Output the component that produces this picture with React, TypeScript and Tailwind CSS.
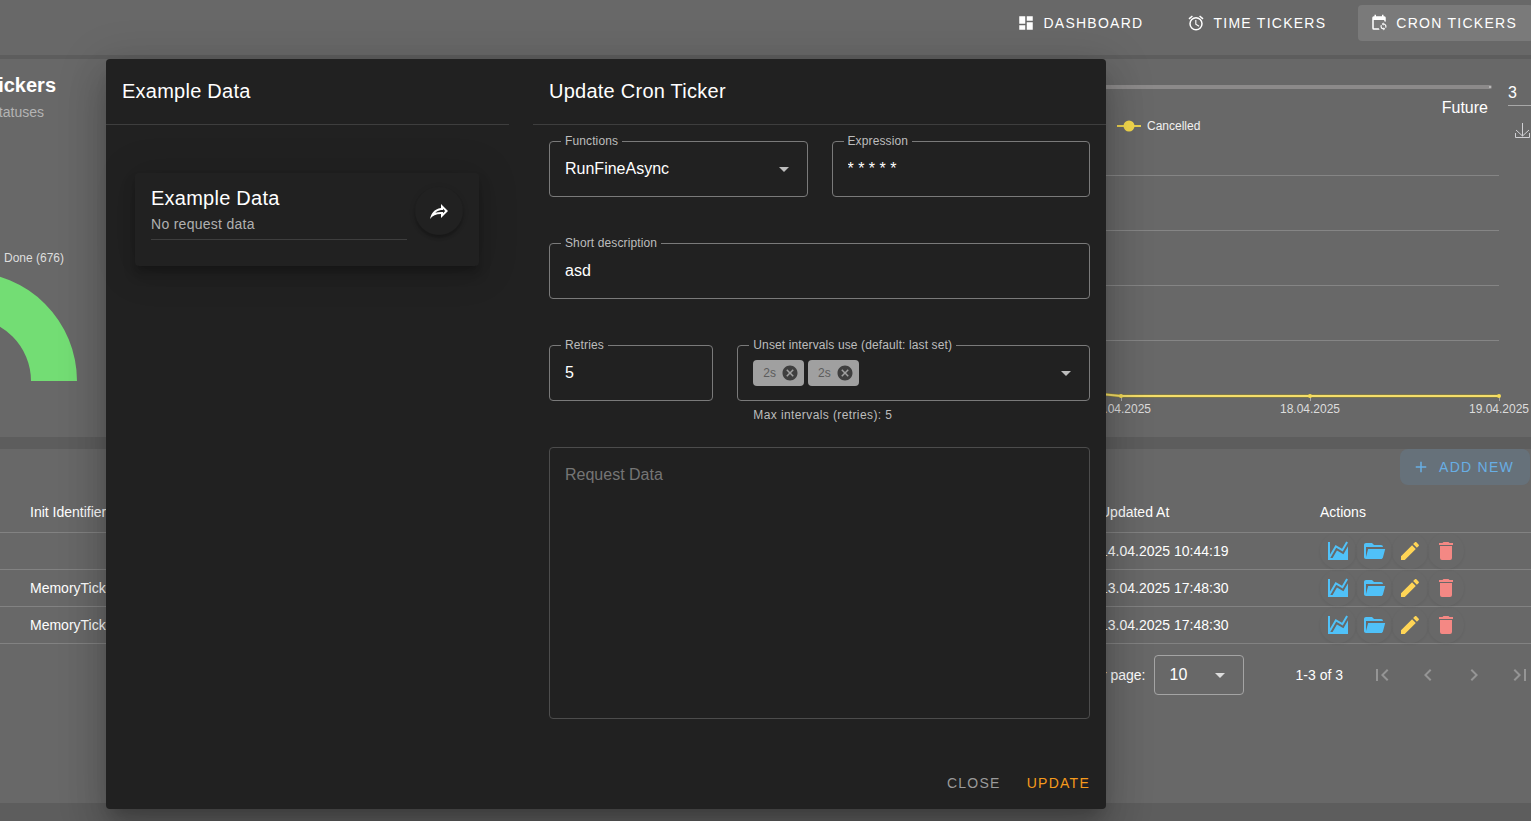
import type { ReactNode } from "react";

const icons = {
  dashboard: "M13,3V9H21V3M13,21H21V11H13M3,21H11V15H3M3,13H11V3H3V13Z",
  alarm:
    "M12,20A7,7 0 0,1 5,13A7,7 0 0,1 12,6A7,7 0 0,1 19,13A7,7 0 0,1 12,20M12,4A9,9 0 0,0 3,13A9,9 0 0,0 12,22A9,9 0 0,0 21,13A9,9 0 0,0 12,4M12.5,8H11V14L15.75,16.85L16.5,15.62L12.5,13.25V8M7.88,3.39L6.6,1.86L2,5.71L3.29,7.24L7.88,3.39M22,5.72L17.4,1.86L16.11,3.39L20.71,7.25L22,5.72Z",
  calendarSync:
    "M18,11V12.5C21.19,12.5 23.09,16.05 21.33,18.71L20.24,17.62C21.06,15.96 19.85,14 18,14V15.5L15.75,13.25L18,11M18,22V20.5C14.81,20.5 12.91,16.95 14.67,14.29L15.76,15.38C14.94,17.04 16.15,19 18,19V17.5L20.25,19.75L18,22M19,3H18V1H16V3H8V1H6V3H5A2,2 0 0,0 3,5V19A2,2 0 0,0 5,21H12.8C12.3,20.4 12,19.7 11.7,19H5V8H19V9.6C19.7,9.7 20.4,9.9 21,10.2V5A2,2 0 0,0 19,3Z",
  chart:
    "M17.45,15.18L22,7.31V21H2V3H4V15.54L9.5,6L16,9.78L20.24,2.45L21.97,3.45L16.74,12.5L10.23,8.75L4.31,19H6.57L10.96,11.44L17.45,15.18Z",
  folder:
    "M19,20H4C2.89,20 2,19.1 2,18V6C2,4.89 2.89,4 4,4H10L12,6H19A2,2 0 0,1 21,8H21L4,8V18L6.14,10H23.21L20.93,18.5C20.7,19.37 19.92,20 19,20Z",
  pencil:
    "M20.71,7.04C21.1,6.65 21.1,6 20.71,5.63L18.37,3.29C18,2.9 17.35,2.9 16.96,3.29L15.12,5.12L18.87,8.87M3,17.25V21H6.75L17.81,9.93L14.06,6.18L3,17.25Z",
  trash:
    "M19,4H15.5L14.5,3H9.5L8.5,4H5V6H19M6,19A2,2 0 0,0 8,21H16A2,2 0 0,0 18,19V7H6V19Z",
  share:
    "M14,5V9C7,10 4,15 3,20C5.5,16.5 9,14.9 14,14.9V19L21,12L14,5M16,9.83L18.17,12L16,14.17V12.9H14C11.93,12.9 10.07,13.28 8.34,13.85C9.74,12.46 11.54,11.37 14,11H16V9.83Z",
  closeCircle:
    "M12,2C17.53,2 22,6.47 22,12C22,17.53 17.53,22 12,22C6.47,22 2,17.53 2,12C2,6.47 6.47,2 12,2M15.59,7L12,10.59L8.41,7L7,8.41L10.59,12L7,15.59L8.41,17L12,13.41L15.59,17L17,15.59L13.41,12L17,8.41L15.59,7Z",
  menuDown: "M7,10L12,15L17,10H7Z",
  plus: "M19,13H13V19H11V13H5V11H11V5H13V11H19V13Z",
  first: "M18.41,16.59L13.82,12L18.41,7.41L17,6L11,12L17,18L18.41,16.59M6,6H8V18H6V6Z",
  prev: "M15.41,16.58L10.83,12L15.41,7.41L14,6L8,12L14,18L15.41,16.58Z",
  next: "M8.59,16.58L13.17,12L8.59,7.41L10,6L16,12L10,18L8.59,16.58Z",
  last: "M5.59,7.41L10.18,12L5.59,16.59L7,18L13,12L7,6L5.59,7.41M16,6H18V18H16V6Z",
};

function Icon({ name, className = "size-6" }: { name: keyof typeof icons; className?: string }) {
  return (
    <svg viewBox="0 0 24 24" fill="currentColor" aria-hidden="true" className={`shrink-0 ${className}`}>
      <path d={icons[name]} />
    </svg>
  );
}

function NavLink({ icon, label, active }: { icon: keyof typeof icons; label: string; active?: boolean }) {
  return (
    <a
      href="#"
      className={`flex h-9 items-center gap-2 rounded pl-3 pr-4 text-sm tracking-[0.09em] text-white ${active ? "bg-[#7a7a7a]" : ""}`}
    >
      <Icon name={icon} className="size-[18px]" />
      {label}
    </a>
  );
}

function StatusCard() {
  return (
    <section className="w-[440px] overflow-hidden bg-[#686868]">
      <div className="flex w-14 justify-end pt-3">
        <h2 className="text-xl font-bold text-white">Tickers</h2>
      </div>
      <div className="flex w-11 justify-end pt-[3px]">
        <p className="text-sm text-[#b4b4b4]">Statuses</p>
      </div>
      <svg width="110" height="150" viewBox="0 0 110 150" className="mt-[109px]">
        <text x="4" y="31" fontSize="12" fill="#dedede">Done (676)</text>
        <path d="M-32,41A109,109 0 0 1 77,150H31A63,63 0 0 0 -32,87Z" fill="#73dd74" />
      </svg>
    </section>
  );
}

const gridLines = [60, 115, 170, 225];
const dates = [
  { x: 30, label: "17.04.2025" },
  { x: 219, label: "18.04.2025" },
  { x: 408, label: "19.04.2025" },
];

function TimelineCard() {
  return (
    <section className="flex min-w-0 flex-1 flex-col items-end overflow-hidden bg-[#686868]">
      <div className="flex w-full gap-4">
        <div className="flex-1 pt-[26px]">
          <div className="flex h-1 items-center justify-end rounded-full bg-[#8c8a8a] pr-px">
            <span className="size-[2px] rounded-full bg-[#c4c4c4]" />
          </div>
          <p className="pr-1 pt-[7px] text-right text-base text-white">Future</p>
        </div>
        <div className="w-[23px] pt-[22px]">
          <input
            aria-label="Days"
            defaultValue="3"
            className="h-6 w-full border-b border-[#a8a8a8] bg-transparent text-base text-white outline-none"
          />
        </div>
      </div>
      <svg width="440" height="310" viewBox="0 0 440 310" className="-mt-[5px] shrink-0">
        <path d="M26,11H50" stroke="#ead04f" strokeWidth="2" />
        <circle cx="38" cy="11" r="5.5" fill="#f4d94d" />
        <text x="56" y="15" fontSize="12" fill="#f0f0f0">Cancelled</text>
        <path d="M431.5,8V21M425,15L431.5,21L438,15M424.5,18V22.5H438.5V18" fill="none" stroke="#d0d0d4" />
        {gridLines.map((y) => (
          <path key={y} d={`M0,${y}.5H408`} stroke="#858585" />
        ))}
        {dates.map((d) => (
          <g key={d.label}>
            <path d={`M${d.x}.5,281V286`} stroke="#aaaaaa" />
            <text x={d.x} y="298" fontSize="12" textAnchor="middle" fill="#dcdcdc">{d.label}</text>
          </g>
        ))}
        <path d="M0,278L30,281H408" fill="none" stroke="#8f8531" strokeWidth="3" />
        <path d="M0,278L30,281H408" fill="none" stroke="#f5de6a" strokeWidth="2" />
        {dates.map((d) => (
          <circle key={d.label} cx={d.x} cy="281" r="2" fill="#f6dc55" />
        ))}
      </svg>
    </section>
  );
}

const rows = [
  { id: "", updated: "14.04.2025 10:44:19" },
  { id: "MemoryTick", updated: "13.04.2025 17:48:30" },
  { id: "MemoryTick", updated: "13.04.2025 17:48:30" },
];

const actions: { icon: keyof typeof icons; label: string; color: string }[] = [
  { icon: "chart", label: "Chart", color: "text-[#50c1f8]" },
  { icon: "folder", label: "Occurrences", color: "text-[#50c1f8]" },
  { icon: "pencil", label: "Edit", color: "text-[#ffd556]" },
  { icon: "trash", label: "Delete", color: "text-[#f48884]" },
];

const pages: { icon: keyof typeof icons; label: string }[] = [
  { icon: "first", label: "First page" },
  { icon: "prev", label: "Previous page" },
  { icon: "next", label: "Next page" },
  { icon: "last", label: "Last page" },
];

function TickerTable() {
  return (
    <section className="flex flex-1 flex-col bg-[#686868] text-sm text-white">
      <div className="flex justify-end pr-px">
        <button className="flex h-9 items-center gap-[9px] rounded-lg bg-[#66717a] pl-3 pr-4 text-sm tracking-[0.09em] text-[#68aee4]">
          <Icon name="plus" className="size-[18px]" />
          ADD NEW
        </button>
      </div>
      <table className="w-full table-fixed border-collapse text-left">
        <thead>
          <tr className="h-[47px] border-b border-[#828282]">
            <th className="pl-[30px] pt-2 font-normal">Init Identifier</th>
            <th className="w-[220px] px-4 pt-2 font-normal">Updated At</th>
            <th className="w-[227px] px-4 pt-2 font-normal">Actions</th>
          </tr>
        </thead>
        <tbody>
          {rows.map((row, i) => (
            <tr key={i} className="h-[37px] border-b border-[#828282]">
              <td className="pl-[30px]">{row.id}</td>
              <td className="whitespace-nowrap px-4">{row.updated}</td>
              <td className="px-4">
                <div className="flex">
                  {actions.map((a) => (
                    <button
                      key={a.label}
                      aria-label={a.label}
                      className={`flex size-9 items-center justify-center rounded-full shadow-[0_1px_3px_rgba(0,0,0,0.07)] ${a.color}`}
                    >
                      <Icon name={a.icon} />
                    </button>
                  ))}
                </div>
              </td>
            </tr>
          ))}
        </tbody>
      </table>
      <div className="flex items-center justify-end overflow-hidden pt-[11px]">
        <label htmlFor="per-page" className="pr-2">Items per page:</label>
        <div className="relative">
          <select
            id="per-page"
            className="h-10 w-[90px] appearance-none rounded border border-[#a4a4a4] bg-transparent pl-[15px] text-base outline-none"
          >
            <option>10</option>
          </select>
          <Icon name="menuDown" className="pointer-events-none absolute right-3 top-2 size-6 text-[#dcdcdc]" />
        </div>
        <span className="pl-[52px] pr-[19px]">1-3 of 3</span>
        <div className="-mr-[9px] flex gap-1.5">
          {pages.map((p) => (
            <button key={p.label} aria-label={p.label} className="flex size-10 items-center justify-center text-[#959595]">
              <Icon name={p.icon} />
            </button>
          ))}
        </div>
      </div>
    </section>
  );
}

function Field({ id, label, className = "", children }: { id: string; label: string; className?: string; children: ReactNode }) {
  return (
    <div className={`relative h-14 rounded border border-[#7a7a7a] ${className}`}>
      <label htmlFor={id} className="absolute -top-[9px] left-[11px] bg-[#212121] px-1 text-xs leading-4 tracking-[0.01em] text-[#bdbdbd]">
        {label}
      </label>
      {children}
    </div>
  );
}

const inputStyle = "h-full w-full appearance-none bg-transparent px-[15px] text-base text-white outline-none";

function Dialog() {
  return (
    <div
      role="dialog"
      aria-label="Update Cron Ticker"
      className="flex w-[1000px] rounded bg-[#212121] text-white shadow-[0_11px_15px_-7px_rgba(0,0,0,0.2),0_24px_38px_3px_rgba(0,0,0,0.14),0_9px_46px_8px_rgba(0,0,0,0.12)]"
    >
      <div className="w-[403px]">
        <h2 className="flex h-[66px] items-center border-b border-[#3e3e3e] px-4 pb-0.5 text-xl tracking-[0.0125em]">Example Data</h2>
        <div className="pl-[29px] pr-[30px] pt-12">
          <div className="flex gap-2 rounded px-4 pb-[26px] pt-[11px] shadow-[0_5px_6px_-3px_rgba(0,0,0,0.2),0_9px_12px_1px_rgba(0,0,0,0.14),0_3px_36px_6px_rgba(0,0,0,0.12)]">
            <div className="flex-1 border-b border-[#3e3e3e] pb-[3px]">
              <h3 className="text-xl leading-7 tracking-[0.0125em]">Example Data</h3>
              <p className="text-sm leading-6 tracking-[0.02em] text-[#b0b0b0]">No request data</p>
            </div>
            <button
              aria-label="Use example"
              className="mt-[3px] flex size-12 items-center justify-center rounded-full shadow-[0_3px_3px_rgba(0,0,0,0.22),0_1px_6px_rgba(0,0,0,0.12)]"
            >
              <Icon name="share" />
            </button>
          </div>
        </div>
      </div>
      <form className="ml-6 flex flex-1 flex-col">
        <h2 className="flex h-[66px] items-center border-b border-[#3e3e3e] px-4 pb-0.5 text-xl tracking-[0.0125em]">Update Cron Ticker</h2>
        <div className="grid grid-cols-12 gap-x-6 gap-y-[46px] px-4 pt-4">
          <Field id="functions" label="Functions" className="col-span-6">
            <select id="functions" className={inputStyle}>
              <option>RunFineAsync</option>
            </select>
            <Icon name="menuDown" className="pointer-events-none absolute right-[11px] top-[15px] size-6 text-[#bdbdbd]" />
          </Field>
          <Field id="expression" label="Expression" className="col-span-6">
            <input id="expression" defaultValue="* * * * *" className={inputStyle} />
          </Field>
          <Field id="description" label="Short description" className="col-span-12">
            <input id="description" defaultValue="asd" className={inputStyle} />
          </Field>
          <Field id="retries" label="Retries" className="col-span-4">
            <input id="retries" defaultValue="5" className={inputStyle} />
          </Field>
          <div className="col-span-8 h-14">
            <Field id="intervals" label="Unset intervals use (default: last set)">
              <div className="flex h-full items-center gap-1 pl-[15px] pr-[11px]">
                {[0, 1].map((i) => (
                  <span key={i} className="flex h-[26px] items-center gap-[5px] rounded bg-[#a0a0a0] pl-2.5 pr-[5px] text-xs text-[#5c5c5c]">
                    2s
                    <button type="button" aria-label="Remove 2s" className="text-[#3f3f3f]">
                      <Icon name="closeCircle" className="size-[18px]" />
                    </button>
                  </span>
                ))}
                <input id="intervals" className="min-w-0 flex-1 bg-transparent outline-none" />
                <Icon name="menuDown" className="size-6 text-[#bdbdbd]" />
              </div>
            </Field>
            <p className="pl-4 pt-1.5 text-xs tracking-[0.033em] text-[#bdbdbd]">Max intervals (retries): 5</p>
          </div>
          <textarea
            aria-label="Request Data"
            placeholder="Request Data"
            className="col-span-12 h-[272px] resize-none rounded border border-[#4c4c4c] bg-transparent px-[15px] py-[15px] text-base outline-none placeholder:text-[#757575]"
          />
        </div>
        <div className="flex justify-end gap-[26px] pb-2 pr-4 pt-[46px] text-sm tracking-[0.09em]">
          <button type="button" className="h-9 text-[#9a9a9a]">CLOSE</button>
          <button type="submit" className="h-9 text-[#f59a1c]">UPDATE</button>
        </div>
      </form>
    </div>
  );
}

export default function App() {
  return (
    <div className="relative h-screen overflow-hidden bg-[#5d5d5d] font-['Liberation_Sans',Arial,sans-serif]">
      <div className="flex h-full flex-col pb-[18px]">
        <header className="flex h-[55px] shrink-0 justify-end overflow-hidden bg-[#686868] pt-[5px]">
          <nav className="-mr-0.5 flex gap-4">
            <NavLink icon="dashboard" label="DASHBOARD" />
            <NavLink icon="alarm" label="TIME TICKERS" />
            <NavLink icon="calendarSync" label="CRON TICKERS" active />
          </nav>
        </header>
        <main className="flex flex-1 flex-col gap-3 pt-1">
          <div className="flex h-[378px] shrink-0 gap-3">
            <StatusCard />
            <TimelineCard />
          </div>
          <TickerTable />
        </main>
      </div>
      <div className="absolute inset-0 flex items-start pl-[106px] pt-[59px]">
        <Dialog />
      </div>
    </div>
  );
}
